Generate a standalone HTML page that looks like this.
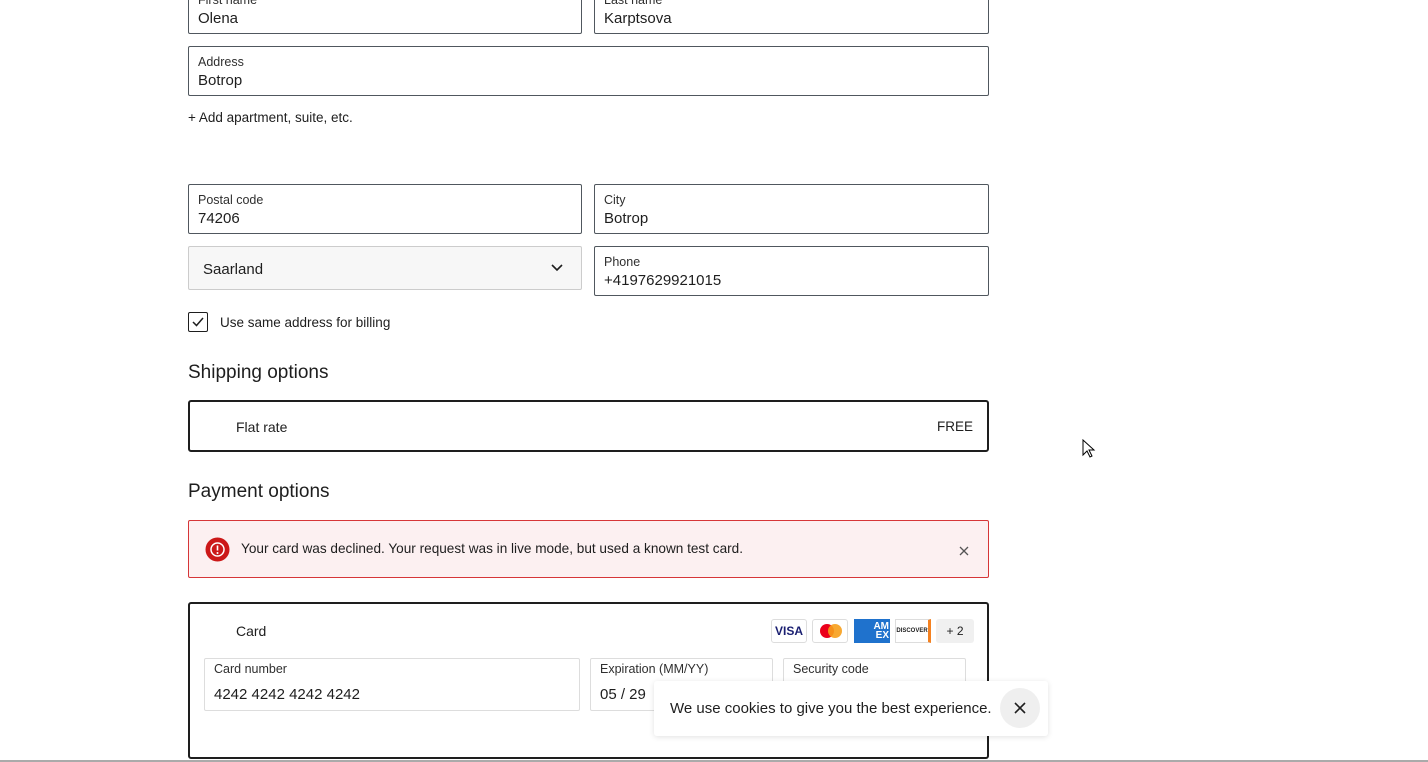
<!DOCTYPE html>
<html><head><style>
*{box-sizing:border-box;margin:0;padding:0}
body{width:1428px;height:762px;overflow:hidden;background:#fff;font-family:"Liberation Sans",sans-serif;color:#1e1e1e;position:relative}
.f{position:absolute;border:1px solid #50575e;border-radius:2px;background:#fff}
.f .l{position:absolute;left:9px;top:8px;font-size:12.5px;color:#2f2f2f}
.f .v{position:absolute;left:9px;top:25px;font-size:15px;color:#1e1e1e}
.a{position:absolute}
</style></head><body>
<div class="f" style="left:188px;top:-16px;width:394px;height:50px"><span class="l">First name</span><span class="v">Olena</span></div>
<div class="f" style="left:594px;top:-16px;width:395px;height:50px"><span class="l">Last name</span><span class="v">Karptsova</span></div>
<div class="f" style="left:188px;top:46px;width:801px;height:50px"><span class="l">Address</span><span class="v">Botrop</span></div>
<div class="a" style="left:188px;top:110px;font-size:13.5px">+ Add apartment, suite, etc.</div>
<div class="f" style="left:188px;top:184px;width:394px;height:50px"><span class="l">Postal code</span><span class="v">74206</span></div>
<div class="f" style="left:594px;top:184px;width:395px;height:50px"><span class="l">City</span><span class="v">Botrop</span></div>
<div class="f" style="left:188px;top:246px;width:394px;height:44px;background:#f7f7f7;border-color:#ccc"><span class="a" style="left:14px;top:14px;font-size:15px">Saarland</span>
<svg class="a" style="left:361px;top:16px" width="14" height="10"><path d="M2 2l5 5 5-5" fill="none" stroke="#1e1e1e" stroke-width="1.6"/></svg></div>
<div class="f" style="left:594px;top:246px;width:395px;height:50px"><span class="l">Phone</span><span class="v">+4197629921015</span></div>
<div class="a" style="left:188px;top:312px;width:20px;height:20px;border:1px solid #1e1e1e;border-radius:2px"><svg width="18" height="18"><path d="M4 9l3.5 3.5L14 5" fill="none" stroke="#1e1e1e" stroke-width="1.5"/></svg></div>
<div class="a" style="left:220px;top:315px;font-size:13.5px">Use same address for billing</div>
<div class="a" style="left:188px;top:362px;font-size:19px">Shipping options</div>
<div class="a" style="left:188px;top:400px;width:801px;height:52px;border:2px solid #1e1e1e;border-radius:3px">
<span class="a" style="left:46px;top:17px;font-size:14px">Flat rate</span><span class="a" style="right:14px;top:17px;font-size:13.5px">FREE</span></div>
<div class="a" style="left:188px;top:481px;font-size:19px">Payment options</div>
<div class="a" style="left:188px;top:520px;width:801px;height:58px;border:1px solid #d63638;border-radius:2px;background:#fcf0f1">
<svg class="a" style="left:16px;top:16px" width="25" height="25"><circle cx="12.5" cy="12.5" r="12" fill="#cc1818"/><circle cx="12.5" cy="12.5" r="6.5" fill="none" stroke="#fff" stroke-width="1.5"/><path d="M12.5 8.5v5" stroke="#fff" stroke-width="1.6"/><circle cx="12.5" cy="16" r="1" fill="#fff"/></svg>
<span class="a" style="left:52px;top:20px;font-size:13.6px">Your card was declined. Your request was in live mode, but used a known test card.</span>
<svg class="a" style="left:770px;top:25px" width="10" height="10"><path d="M1 1l8 8M9 1l-8 8" stroke="#555" stroke-width="1.3"/></svg></div>
<div class="a" style="left:188px;top:602px;width:801px;height:157px;border:2px solid #1e1e1e;border-radius:3px">
<span class="a" style="left:46px;top:19px;font-size:14px">Card</span>
<div class="a" style="left:581px;top:15px;width:36px;height:24px;border:1px solid #ddd;border-radius:3px;font:bold 12px 'Liberation Sans';color:#1a1f71;text-align:center;line-height:22px">VISA</div>
<div class="a" style="left:622px;top:15px;width:36px;height:24px;border:1px solid #ddd;border-radius:3px"><span class="a" style="left:7px;top:4px;width:14px;height:14px;border-radius:50%;background:#eb001b"></span><span class="a" style="left:15px;top:4px;width:14px;height:14px;border-radius:50%;background:#f79e1b;opacity:.9"></span></div>
<div class="a" style="left:664px;top:15px;width:36px;height:24px;background:#1f72cd;color:#fff;font:bold 10px 'Liberation Sans';text-align:right;padding:3px 1px;line-height:9px">AM<br>EX</div>
<div class="a" style="left:705px;top:15px;width:36px;height:24px;border:1px solid #ddd;border-right:3px solid #f48120;font:bold 6px 'Liberation Sans';text-align:center;line-height:22px">DISCOVER</div>
<div class="a" style="left:746px;top:15px;width:38px;height:24px;background:#f0f0f0;border-radius:3px;font-size:12px;text-align:center;line-height:24px">+ 2</div>
<div class="f" style="left:14px;top:54px;width:376px;height:53px;border-color:#ddd"><span class="l" style="top:3px">Card number</span><span class="v" style="top:27px">4242 4242 4242 4242</span></div>
<div class="f" style="left:400px;top:54px;width:183px;height:53px;border-color:#ddd"><span class="l" style="top:3px">Expiration (MM/YY)</span><span class="v" style="top:27px">05 / 29</span></div>
<div class="f" style="left:593px;top:54px;width:183px;height:53px;border-color:#ddd"><span class="l" style="top:3px">Security code</span></div>
</div>
<div class="a" style="left:654px;top:681px;width:394px;height:55px;background:#fff;box-shadow:0 1px 6px rgba(0,0,0,.12);border-radius:3px">
<span class="a" style="left:16px;top:19px;font-size:15px">We use cookies to give you the best experience.</span>
<div class="a" style="left:346px;top:7px;width:40px;height:40px;border-radius:50%;background:#efefef"><svg class="a" style="left:14px;top:14px" width="12" height="12"><path d="M1 1l10 10M11 1L1 11" stroke="#1e1e1e" stroke-width="1.6"/></svg></div></div>
<div class="a" style="left:0;top:760px;width:1428px;height:2px;background:#aaa"></div>
<svg class="a" style="left:1082px;top:439px" width="14" height="20"><path d="M1 1v15l4-4 3 6 2-1-3-6h5z" fill="#fff" stroke="#000"/></svg>
</body></html>
